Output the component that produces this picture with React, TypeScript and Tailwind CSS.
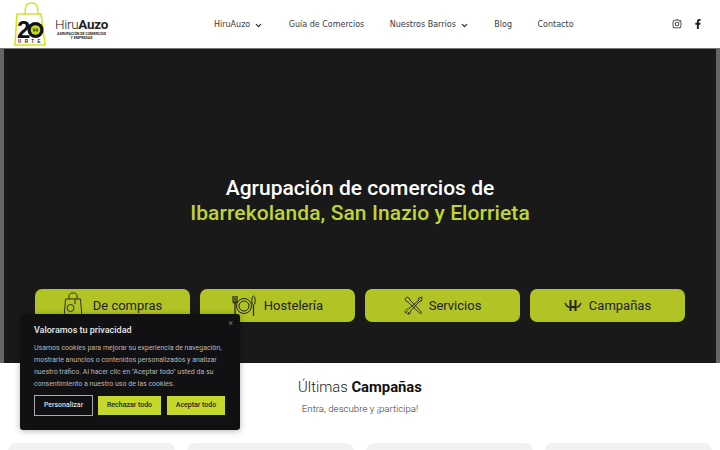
import { ChevronDown } from "lucide-react";
import { FaFacebookF, FaInstagram } from "react-icons/fa";

const LogoBag = () => (
  <div className="relative h-[48px] w-[34px] shrink-0">
    <svg width="34" height="48" viewBox="0 0 34 48" fill="none" className="absolute left-0 top-0">
      <path d="M12 14C12 6 13.5 3 18.5 3S25 6 25 14" stroke="#d4e41f" strokeWidth="1.4" />
      <path d="M4 14H28L32 45H2Z" stroke="#d4e41f" strokeWidth="1.6" />
      <rect x="3" y="38.5" width="28" height="5.5" fill="#fff" />
      <circle cx="22.5" cy="30" r="8" fill="#111" />
      <circle cx="22.5" cy="30" r="4.8" fill="#c5da23" />
      <path d="M21 28V32M24 28V32M20 30H25" stroke="#111" strokeWidth="0.7" />
    </svg>
    <span className="absolute left-[4px] top-[21px] font-['Liberation_Sans'] text-[24px] leading-[18px] font-bold text-[#111]">
      2
    </span>
    <span className="absolute left-[5px] top-[39px] text-[4.5px] leading-[5px] font-bold tracking-[3.4px] text-[#111] font-['Liberation_Sans']">
      URTE
    </span>
  </div>
);

const BagIcon = () => (
  <svg width="20" height="27" viewBox="0 0 20 27" fill="none" stroke="#222" strokeWidth="0.9">
    <path d="M6 7V4C6 1.5 8 1 10 1S14 1.5 14 4V7" />
    <path d="M2.5 7H17.5L19 26H1Z" />
    <circle cx="7.5" cy="16" r="3.5" />
    <path d="M12 7V12" />
  </svg>
);

const PlateIcon = () => (
  <svg width="24" height="22" viewBox="0 0 24 22" fill="none" stroke="#222" strokeWidth="1">
    <circle cx="12" cy="11" r="7.5" />
    <circle cx="12" cy="11" r="5" />
    <path d="M1 1V6C1 8 3 8 3 8S5 8 5 6V1M3 1V21" strokeWidth="1.2" />
    <ellipse cx="21.5" cy="5.5" rx="1.7" ry="4.5" />
    <path d="M21.5 10V21" strokeWidth="1.2" />
  </svg>
);

const ToolsIcon = () => (
  <svg width="19" height="19" viewBox="0 0 19 19" fill="none" stroke="#222" strokeWidth="0.9">
    <path d="M1 3L3 1L5 2L6 4L17 15.5C18 17 17 18 15.5 17L4 6L2 5Z" />
    <path d="M18 1L14.5 2L15 4L4.5 13C2 13 0.5 15 1.5 17L3.5 15.5L5 17L3.5 18C6 18.5 7 17 6.5 15L16 5L17.5 5Z" />
  </svg>
);

const HandsIcon = () => (
  <svg width="18" height="13" viewBox="0 0 18 13" fill="none" stroke="#222">
    <path d="M6.5 1V12M11.5 1V12" strokeWidth="2" />
    <path d="M6.5 8H11.5" strokeWidth="2" />
    <path d="M1 4C2 7 3.5 8 5.5 8.5M17 4C16 7 14.5 8 12.5 8.5" strokeWidth="1.2" />
  </svg>
);

const navItems = [
  { label: "HiruAuzo", caret: true },
  { label: "Guía de Comercios", caret: false },
  { label: "Nuestros Barrios", caret: true },
  { label: "Blog", caret: false },
  { label: "Contacto", caret: false },
];

const categories = [
  { label: "De compras", icon: <BagIcon />, gap: "gap-[10px]" },
  { label: "Hostelería", icon: <PlateIcon />, gap: "gap-[8px]" },
  { label: "Servicios", icon: <ToolsIcon />, gap: "gap-[6px]" },
  { label: "Campañas", icon: <HandsIcon />, gap: "gap-[7px]" },
];

export default function App() {
  return (
    <div className="relative h-[450px] w-[720px] overflow-hidden bg-white font-['Roboto',sans-serif] antialiased">
      <header className="flex h-[49px] items-center border-b border-[#777] bg-white pl-[13px] pr-[17px]">
        <LogoBag />
        <div className="ml-[8px] mt-[9px] flex w-[53px] flex-col items-center">
          <div className="text-[13.5px] leading-[14px] tracking-[-0.3px] text-[#222]">
            <span className="font-light">Hiru</span>
            <span className="font-bold">Auzo</span>
          </div>
          <div className="mt-[1px] text-center text-[3.6px] leading-[4.5px] font-bold text-[#222]">
            AGRUPACIÓN DE COMERCIOS
            <br />Y EMPRESAS
          </div>
        </div>
        <nav className="ml-[106px] mt-[2px] flex items-center gap-[25.5px] font-['DejaVu_Sans',sans-serif] text-[8px] text-[#3a3a44]">
          {navItems.map((item) => (
            <div key={item.label} className="flex items-center gap-[4px]">
              <span>{item.label}</span>
              {item.caret && <ChevronDown size={9} strokeWidth={3} color="#222" />}
            </div>
          ))}
        </nav>
        <div className="ml-auto flex items-center gap-[11px] text-[#222]">
          <FaInstagram size={10} />
          <FaFacebookF size={10} />
        </div>
      </header>

      <section className="flex h-[314px] flex-col items-center border-x-[4px] border-[#666] bg-[#191919]">
        <h1 className="mt-[127px] text-center text-[21px] leading-[25px] font-medium text-white">
          Agrupación de comercios de
          <br />
          <span className="tracking-[0.08px] text-[#bed62f]">Ibarrekolanda, San Inazio y Elorrieta</span>
        </h1>
        <div className="mt-[63px] flex gap-[10px]">
          {categories.map((cat) => (
            <div
              key={cat.label}
              className={`flex h-[33px] w-[155px] items-center justify-center rounded-[7px] bg-[#b1c325] text-[13px] text-[#222] ${cat.gap}`}
            >
              {cat.icon}
              <span>{cat.label}</span>
            </div>
          ))}
        </div>
      </section>

      <section className="flex flex-col items-center pt-[14px]">
        <h2 className="text-[14.8px] leading-[20px] font-light text-[#222]">
          Últimas <span className="font-bold text-[#111]">Campañas</span>
        </h2>
        <p className="mt-[5px] text-[9.7px] leading-[14px] font-light text-[#333]">Entra, descubre y ¡participa!</p>
        <div className="mt-[27px] flex w-full justify-between px-[8px]">
          {[0, 1, 2, 3].map((i) => (
            <div key={i} className="h-[40px] w-[167px] rounded-[8px] bg-[#f2f2f2]" />
          ))}
        </div>
      </section>

      <div className="absolute left-[20px] top-[314px] h-[116px] w-[220px] rounded-[3px] bg-[#111113] px-[14px] pt-[10px] shadow-[0_1px_6px_rgba(0,0,0,0.3)]">
        <span className="absolute right-[7px] top-[3px] text-[9px] text-[#777]">×</span>
        <h3 className="text-[9px] leading-[12px] font-medium text-[#e8e8e8]">Valoramos tu privacidad</h3>
        <p className="mt-[6px] text-[7px] leading-[12px] text-[#b8b8b8]">
          Usamos cookies para mejorar su experiencia de navegación, mostrarle anuncios o contenidos personalizados y
          analizar nuestro tráfico. Al hacer clic en "Aceptar todo" usted da su consentimiento a nuestro uso de las
          cookies.
        </p>
        <div className="mt-[5px] flex gap-[5px] text-[7px] font-medium">
          <button className="h-[21px] w-[59px] border border-[#aaa] text-[#ddd]">Personalizar</button>
          <button className="h-[19px] w-[63px] self-center bg-[#c5d92d] text-[#222]">Rechazar todo</button>
          <button className="ml-[1px] h-[19px] w-[58px] self-center bg-[#c5d92d] text-[#222]">Aceptar todo</button>
        </div>
      </div>
    </div>
  );
}
